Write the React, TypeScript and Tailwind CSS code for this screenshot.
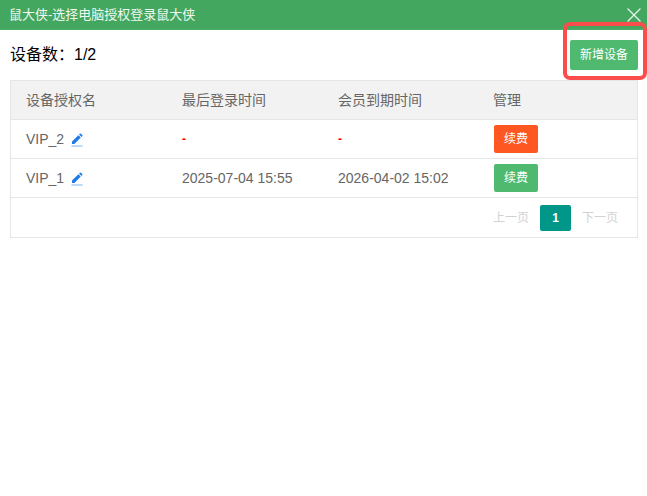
import { X } from 'lucide-react';

const rows = [
  { name: 'VIP_2', login: '-', expire: '-', renew: 'bg-[#ff5722]', empty: true },
  { name: 'VIP_1', login: '2025-07-04 15:55', expire: '2026-04-02 15:02', renew: 'bg-[#4fb96f]', empty: false },
];

function EditIcon() {
  return (
    <svg width="12" height="14" viewBox="0 0 12 14" className="mt-[2px] block">
      <path d="M1 11 L1 8.6 L7.4 2.2 L9.8 4.6 L3.4 11 Z M8.1 1.5 L8.9 0.7 Q9.4 0.2 9.9 0.7 L11.3 2.1 Q11.8 2.6 11.3 3.1 L10.5 3.9 Z" fill="#1e7be8" />
      <rect x="0.5" y="12.5" width="11" height="1" fill="#7ab4f2" />
    </svg>
  );
}

export default function App() {
  return (
    <div className="relative h-[496px] w-[647px] overflow-hidden bg-white font-['Liberation_Sans','Noto_Sans_CJK_SC',sans-serif] text-[14px] text-[#666]">
      <div className="flex h-[30px] items-center justify-between border-b border-[#4caf6b] bg-[#43a75f] pl-[9px] pr-[1px]">
        <span className="text-[13px] text-[#eef8f0]">鼠大侠-选择电脑授权登录鼠大侠</span>
        <X size={24} strokeWidth={1.4} className="text-[#e4f2e8]" />
      </div>

      <div className="flex h-[50px] items-center justify-between pl-[10px] pr-[9px]">
        <span className="text-[16px] text-black">设备数：1/2</span>
        <button className="h-[30px] w-[68px] rounded-[2px] bg-[#4fb96f] text-[12px] text-white">新增设备</button>
      </div>

      <div className="ml-[10px] w-[628px] border border-[#e6e6e6]">
        <div className="grid h-[39px] grid-cols-[156px_156px_155px_1fr] items-center border-b border-[#e6e6e6] bg-[#f2f2f2] pl-[15px]">
          <span>设备授权名</span>
          <span>最后登录时间</span>
          <span>会员到期时间</span>
          <span>管理</span>
        </div>
        {rows.map((row) => (
          <div key={row.name} className="grid h-[39px] grid-cols-[156px_156px_155px_1fr] items-center border-b border-[#e6e6e6] pl-[15px]">
            <span className="flex items-center gap-[7px]">
              {row.name}
              <EditIcon />
            </span>
            <span className={row.empty ? 'font-bold text-[12px] text-[#f00]' : ''}>{row.login}</span>
            <span className={row.empty ? 'font-bold text-[12px] text-[#f00]' : ''}>{row.expire}</span>
            <span className="pl-px">
              <button className={`h-[28px] w-[44px] rounded-[2px] text-[12px] text-white ${row.renew}`}>续费</button>
            </span>
          </div>
        ))}
        <div className="flex h-[39px] items-center justify-end gap-[11px] pr-[19px] text-[12px] text-[#d2d2d2]">
          <span>上一页</span>
          <span className="flex h-[26px] w-[31px] items-center justify-center rounded-[2px] bg-[#009688] font-bold text-white">1</span>
          <span>下一页</span>
        </div>
      </div>

      <div className="absolute left-[563px] top-[22px] h-[58px] w-[84px] rounded-[7px] border-[4px] border-[#fb4d4b]" />
    </div>
  );
}
